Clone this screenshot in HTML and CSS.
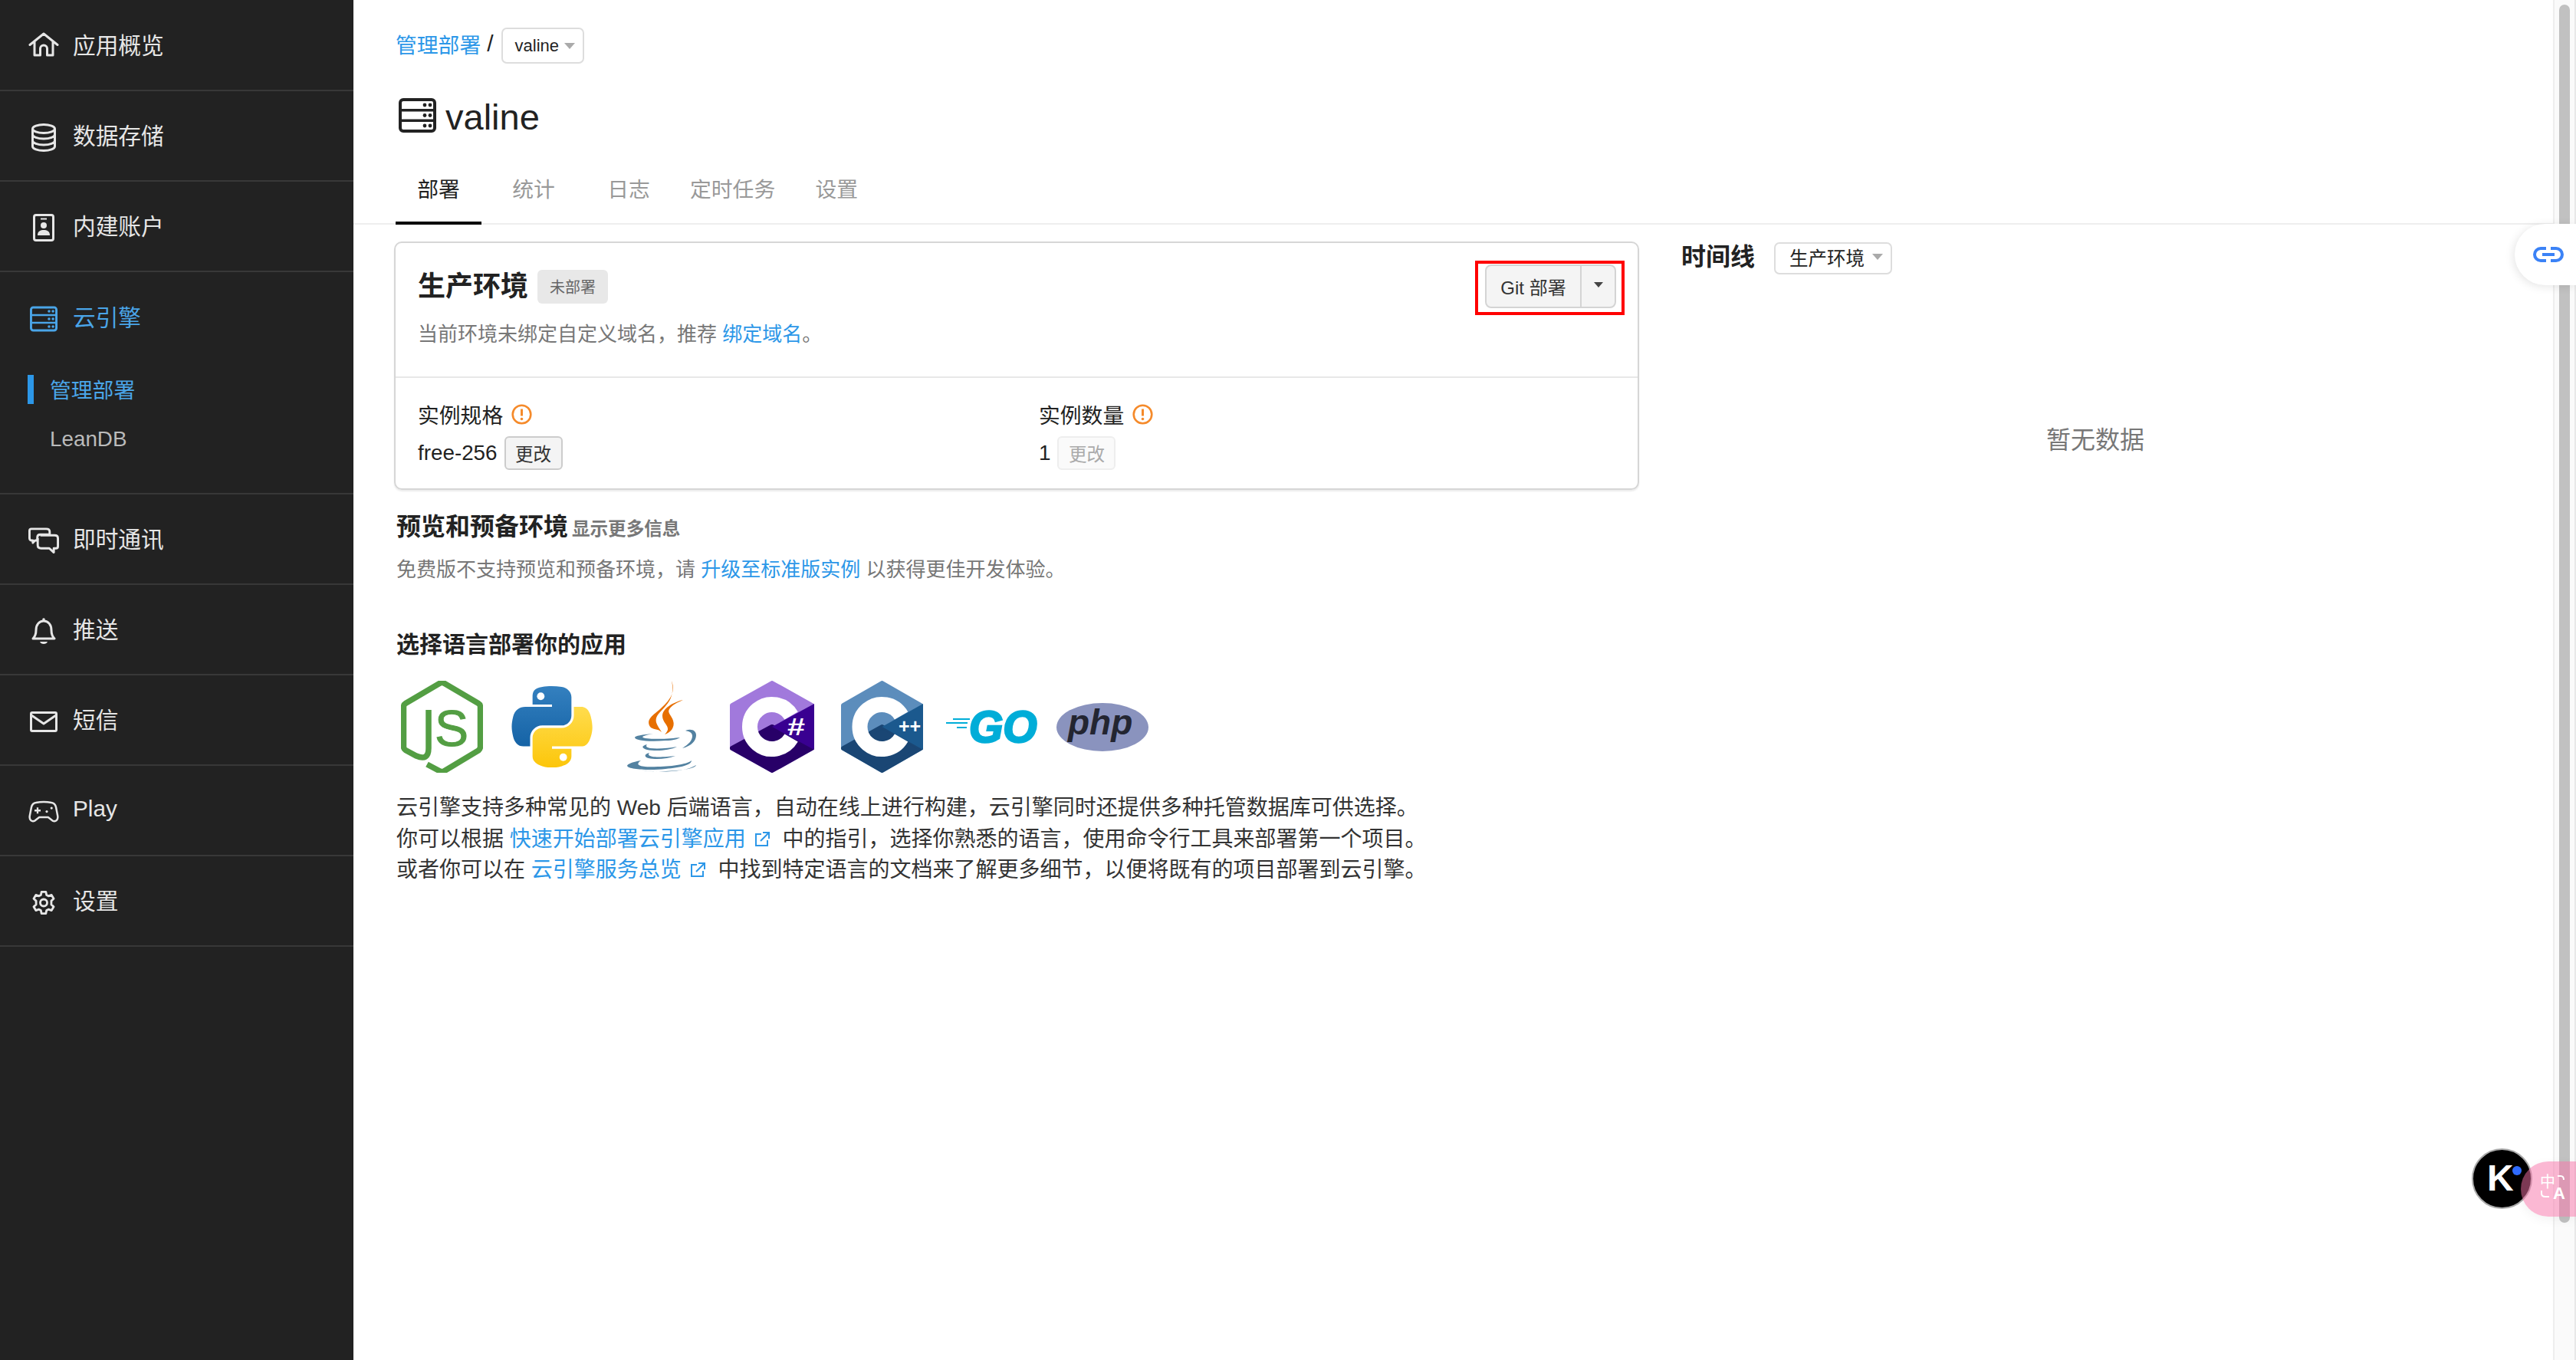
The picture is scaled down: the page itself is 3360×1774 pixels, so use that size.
FILE: index.html
```html
<!DOCTYPE html>
<html lang="zh-CN">

<head>
    <meta charset="UTF-8">
    <title>valine - 云引擎</title>
    <link rel="stylesheet" href="styles.css">
</head>

<body>
    <svg class="sprites" xmlns="http://www.w3.org/2000/svg">
        <symbol id="i-server" viewBox="0 0 49 45">
            <rect x="2" y="2" width="45" height="41" rx="4" fill="none" stroke="currentColor" stroke-width="4" />
            <path d="M2 15.7H47M2 29.3H47" stroke="currentColor" stroke-width="3.5" />
            <g fill="currentColor">
                <circle cx="34" cy="9" r="2.4" /><circle cx="41" cy="9" r="2.4" />
                <circle cx="34" cy="22.5" r="2.4" /><circle cx="41" cy="22.5" r="2.4" />
                <circle cx="34" cy="36" r="2.4" /><circle cx="41" cy="36" r="2.4" />
            </g>
        </symbol>
        <symbol id="i-info" viewBox="0 0 27 27">
            <circle cx="13.5" cy="13.5" r="11.8" fill="none" stroke="#f58a2a" stroke-width="2.6" />
            <path d="M13.5 6.5V15.5" stroke="#f58a2a" stroke-width="3" />
            <circle cx="13.5" cy="19.5" r="1.8" fill="#f58a2a" />
        </symbol>
        <symbol id="i-ext" viewBox="0 0 22 22">
            <path d="M10 4H3V19H18V12M12 2H20V10M20 2L9 13" fill="none" stroke="currentColor" stroke-width="2" />
        </symbol>
    </svg>

    <div class="app">
        <aside class="sidebar">
            <a class="nav-row">
                <span class="nav-icon nav-icon-home">
                    <svg width="40" height="32" viewBox="0 0 40 32" fill="none" stroke="currentColor" stroke-width="3" stroke-linejoin="round" stroke-linecap="round">
                        <path d="M2 16.5L20 2L38 16.5M8 12V30H15.5V21.5A4.5 4.5 0 0 1 24.5 21.5V30H32V12" />
                    </svg>
                </span>
                应用概览
            </a>
            <a class="nav-row">
                <span class="nav-icon">
                    <svg width="32" height="37" viewBox="0 0 32 37" fill="none" stroke="currentColor" stroke-width="3">
                        <ellipse cx="16" cy="7" rx="14.5" ry="5.5" />
                        <path d="M1.5 7V30C1.5 33 8 35.5 16 35.5S30.500 33 30.500 30V7M1.500 14.500C1.500 17.500 8 20 16 20S30.500 17.500 30.500 14.500M1.500 22.500C1.500 25.500 8 28 16 28S30.500 25.500 30.500 22.500" />
                    </svg>
                </span>
                数据存储
            </a>
            <a class="nav-row">
                <span class="nav-icon">
                    <svg width="28" height="36" viewBox="0 0 28 36" fill="none" stroke="currentColor" stroke-width="3">
                        <rect x="1.500" y="1.500" width="25" height="33" rx="2.500" />
                        <path d="M10 6.500H18" stroke-width="2" />
                        <circle cx="14" cy="15" r="4" fill="currentColor" stroke="none" />
                        <path d="M6 28C6 22.500 10 21 14 21S22 22.500 22 28Z" fill="currentColor" stroke="none" />
                    </svg>
                </span>
                内建账户
            </a>

            <div class="nav-group">
                <a class="nav-row nav-row-active">
                    <span class="nav-icon"><svg class="server-small"><use href="#i-server" /></svg></span>
                    云引擎
                </a>
                <a class="sub-row sub-row-active">管理部署</a>
                <a class="sub-row">LeanDB</a>
            </div>

            <a class="nav-row">
                <span class="nav-icon">
                    <svg width="41" height="35" viewBox="0 0 41 35" fill="none" stroke="currentColor" stroke-width="3" stroke-linejoin="round">
                        <path d="M4 1.500H24C27 1.500 28.500 3 28.500 5.500V9H16C13.500 9 12 10.500 12 13V17H9L6 20V17H4C2.500 17 1.500 15.500 1.500 14V4C1.500 2.500 2.500 1.500 4 1.500Z" />
                        <path d="M16 10H35C38 10 39.500 11.500 39.500 14V25C39.500 26.500 38.500 27.500 37 27.500H34V33L28 27.500H17C14 27.500 12.500 26 12.500 23.500V14" />
                    </svg>
                </span>
                即时通讯
            </a>
            <a class="nav-row">
                <span class="nav-icon">
                    <svg width="32" height="36" viewBox="0 0 32 36" fill="none" stroke="currentColor" stroke-width="3" stroke-linejoin="round">
                        <path d="M2 28C5 25 6 22 6 17C6 10 10 5 16 5S26 10 26 17C26 22 27 25 30 28Z" />
                        <circle cx="16" cy="3" r="1.800" fill="currentColor" stroke="none" />
                        <path d="M11 32H21C20 36 12 36 11 32Z" fill="currentColor" stroke="none" />
                    </svg>
                </span>
                推送
            </a>
            <a class="nav-row">
                <span class="nav-icon">
                    <svg width="36" height="27" viewBox="0 0 36 27" fill="none" stroke="currentColor" stroke-width="3" stroke-linejoin="round">
                        <rect x="1.500" y="1.500" width="33" height="24" rx="1.500" />
                        <path d="M2 5L18 16L34 5" />
                    </svg>
                </span>
                短信
            </a>
            <a class="nav-row">
                <span class="nav-icon">
                    <svg width="45" height="32" viewBox="0 0 45 32" fill="none" stroke="currentColor" stroke-width="2.800" stroke-linejoin="round">
                        <path d="M11 2.500C18 1.200 27 1.200 34 2.500C38 3 39.500 5 40.500 9L43 22C44 28 40 31 35.500 29L29 24H16L9.500 29C5 31 1 28 2 22L4.500 9C5.500 5 7 3 11 2.500Z" />
                        <path d="M9 14H18M13.500 9.500V18.500" stroke-width="2.600" />
                        <circle cx="27" cy="15.500" r="1.800" fill="currentColor" stroke="none" />
                        <circle cx="34" cy="10.500" r="1.800" fill="currentColor" stroke="none" />
                    </svg>
                </span>
                Play
            </a>
            <a class="nav-row">
                <span class="nav-icon">
                    <svg width="34" height="35" viewBox="0 0 24 24" fill="none" stroke="currentColor" stroke-width="2" stroke-linejoin="round">
                        <circle cx="12" cy="12" r="3.200" />
                        <path d="M10 2H14L14.600 4.900L16.400 5.900L19.200 4.900L21.200 8.300L19 10.300V13.700L21.200 15.700L19.200 19.100L16.400 18.100L14.600 19.100L14 22H10L9.400 19.100L7.600 18.100L4.800 19.100L2.800 15.700L5 13.700V10.300L2.800 8.300L4.800 4.900L7.600 5.900L9.400 4.900Z" />
                    </svg>
                </span>
                设置
            </a>
        </aside>

        <main class="main">
            <header class="page-head">
                <div class="crumbs">
                    <a class="link crumb-link">管理部署</a>
                    <span class="crumb-sep">/</span>
                    <span class="select select-crumb">valine<i class="caret"></i></span>
                </div>
                <h1 class="page-title"><svg class="server-big"><use href="#i-server" /></svg><span class="page-name">valine</span></h1>
            </header>

            <nav class="tabs">
                <a class="tab tab-active">部署</a>
                <a class="tab">统计</a>
                <a class="tab">日志</a>
                <a class="tab">定时任务</a>
                <a class="tab">设置</a>
            </nav>

            <div class="content">
                <section class="left-col">
                    <div class="card">
                        <div class="card-head">
                            <div class="card-top">
                                <div class="env-title">
                                    <h2>生产环境</h2>
                                    <span class="badge">未部署</span>
                                </div>
                                <div class="git-wrap">
                                    <button class="git-btn">
                                        <span class="git-main">Git 部署</span>
                                        <span class="git-more"><i class="caret caret-dark"></i></span>
                                    </button>
                                </div>
                            </div>
                            <p class="card-desc">当前环境未绑定自定义域名，推荐 <a class="link">绑定域名</a>。</p>
                        </div>
                        <div class="specs">
                            <div class="spec">
                                <div class="spec-name">实例规格 <svg class="info"><use href="#i-info" /></svg></div>
                                <div class="spec-value">free-256 <button class="btn-small">更改</button></div>
                            </div>
                            <div class="spec">
                                <div class="spec-name">实例数量 <svg class="info"><use href="#i-info" /></svg></div>
                                <div class="spec-value">1 <button class="btn-small btn-disabled">更改</button></div>
                            </div>
                        </div>
                    </div>

                    <h3 class="preview-title">预览和预备环境 <small>显示更多信息</small></h3>
                    <p class="preview-text">免费版不支持预览和预备环境，请 <a class="link">升级至标准版实例</a> 以获得更佳开发体验。</p>

                    <h3 class="lang-title">选择语言部署你的应用</h3>
                    <div class="logos">
                        <div class="logo">
                            <svg width="107" height="120" viewBox="0 0 107 120">
                                <path d="M34 109L51 118Q53.500 119 56 118L101 91Q103.500 89 103.500 86V34Q103.500 31 101 29.500L56 3Q53.500 2 51 3L6 29.500Q3.500 31 3.500 34V86Q3.500 89 6 90.500L20 98Q36 105 36 88V38" fill="none" stroke="#539e43" stroke-width="7.500" />
                                <text class="node-s" x="44" y="85">S</text>
                            </svg>
                        </div>
                        <div class="logo">
                            <svg width="106" height="106" viewBox="0 0 111 112">
                                <defs>
                                    <linearGradient id="py-blue" x1="0" y1="0" x2="0" y2="1">
                                        <stop offset="0" stop-color="#3480bf" /><stop offset="1" stop-color="#1563a6" />
                                    </linearGradient>
                                    <linearGradient id="py-yellow" x1="0" y1="0" x2="0" y2="1">
                                        <stop offset="0" stop-color="#ffdc4d" /><stop offset="1" stop-color="#fcc60a" />
                                    </linearGradient>
                                </defs>
                                <path fill="url(#py-blue)" d="M54.920 0C50.340 0 45.960 .410 42.110 1.090C30.760 3.090 28.700 7.290 28.700 15.030V25.250H55.500V28.660H18.640C10.850 28.660 4.030 33.340 1.900 42.250C-.560 52.460 -.670 58.830 1.900 69.480C3.800 77.420 8.350 83.070 16.140 83.070H25.360V70.830C25.360 61.980 33.020 54.180 42.110 54.180H68.880C76.330 54.180 82.280 48.040 82.280 40.560V15.030C82.280 7.770 76.150 2.310 68.880 1.090C64.280 .330 59.500 0 54.920 0Z" />
                                <circle cx="40" cy="14" r="5.200" fill="#fff" />
                                <path fill="url(#py-yellow)" d="M85.630 28.660V40.560C85.630 49.790 77.810 57.560 68.880 57.560H42.110C34.780 57.560 28.700 63.840 28.700 71.180V96.710C28.700 103.980 35.020 108.250 42.110 110.330C50.600 112.830 58.740 113.280 68.880 110.330C75.620 108.380 82.280 104.440 82.280 96.710V86.490H55.500V83.070H95.680C103.470 83.070 106.370 77.640 109.080 69.480C111.870 61.080 111.750 53 109.080 42.250C107.150 34.500 103.470 28.660 95.680 28.660Z" />
                                <circle cx="71" cy="98" r="5.200" fill="#fff" />
                            </svg>
                        </div>
                        <div class="logo">
                            <svg width="91" height="120" viewBox="0 0 91 120">
                                <g fill="#e76f00">
                                    <path d="M58 0C64 16 54 27 44 36C34 45 24 50 30 60C33 64 40 62 45 67C40 58 33 52 42 42C52 31 63 22 58 0Z" />
                                    <path d="M73 25C60 28 46 36 46 46C46 54 54 58 53 64C52 67 50 69 49 70C56 68 63 61 60 52C58 45 52 42 55 37C58 32 66 28 73 25Z" />
                                </g>
                                <g fill="#5382a1">
                                    <path d="M34 69C20 70 10 72 10 74C10 78 30 80 50 78C60 78 66 76 69 74C60 75 40 77 24 75C18 74 18 72 34 69Z" />
                                    <path d="M26 83C18 85 19 88 26 90C38 92 55 91 65 86C55 88 40 89 30 88C25 87 24 85 26 83Z" />
                                    <path d="M29 94C21 96 23 100 28 101C38 103 52 102 63 98C55 99 40 100 33 99C28 98 27 96 29 94Z" />
                                    <path d="M18 104C6 106 0 109 0 111C2 116 30 117 50 115C70 113 84 110 84 104C80 108 60 112 40 112C20 113 8 111 18 104Z" />
                                    <path d="M17 116C35 120 75 120 90 110C88 115 70 117 50 118C40 119 25 118 17 116Z" />
                                    <path d="M76 65C84 62 90 65 90 71C90 78 84 85 72 88C80 83 85 78 85 72C85 67 80 66 76 65Z" />
                                </g>
                            </svg>
                        </div>
                        <div class="logo">
                            <svg width="110" height="120" viewBox="0 0 110 120">
                                <path d="M55 3L107 32V88L55 117L3 88V32Z" fill="#a179dc" stroke="#a179dc" stroke-width="6" stroke-linejoin="round" />
                                <path d="M55 60L3 88L55 117L107 88Z" fill="#280068" stroke="#280068" stroke-width="6" stroke-linejoin="round" />
                                <path d="M55 60L110 30V90Z" fill="#390091" />
                                <path d="M80.100 45.500A29 29 0 1 0 80.100 74.500" fill="none" stroke="#fff" stroke-width="20" />
                                <text class="logo-mark" x="75" y="71" font-size="31" textLength="23" lengthAdjust="spacingAndGlyphs">#</text>
                            </svg>
                        </div>
                        <div class="logo">
                            <svg width="107" height="120" viewBox="0 0 107 120">
                                <path d="M53.500 3L104 32V88L53.500 117L3 88V32Z" fill="#5c8dbc" stroke="#5c8dbc" stroke-width="6" stroke-linejoin="round" />
                                <path d="M53.500 60L3 88L53.500 117L104 88Z" fill="#1a4674" stroke="#1a4674" stroke-width="6" stroke-linejoin="round" />
                                <path d="M53.500 60L107 30V90Z" fill="#1b598e" />
                                <path d="M78.600 45.500A29 29 0 1 0 78.600 74.500" fill="none" stroke="#fff" stroke-width="20" />
                                <text class="logo-mark" x="75" y="68" font-size="25">++</text>
                            </svg>
                        </div>
                        <div class="logo">
                            <svg width="120" height="70" viewBox="0 -12 120 70">
                                <path d="M9 13H31M0 18H28M14 24H27" stroke="#00add8" stroke-width="2" />
                                <text class="go-text" x="30" y="43">GO</text>
                            </svg>
                        </div>
                        <div class="logo">
                            <svg width="120" height="63" viewBox="0 0 120 63">
                                <ellipse cx="60" cy="31.500" rx="60" ry="31.500" fill="#8a93be" />
                                <text class="php-text" x="15" y="41">php</text>
                            </svg>
                        </div>
                    </div>

                    <p class="intro">
                        云引擎支持多种常见的 Web 后端语言，自动在线上进行构建，云引擎同时还提供多种托管数据库可供选择。<br>
                        你可以根据 <a class="link">快速开始部署云引擎应用<svg class="ext"><use href="#i-ext" /></svg></a> 中的指引，选择你熟悉的语言，使用命令行工具来部署第一个项目。<br>
                        或者你可以在 <a class="link">云引擎服务总览<svg class="ext"><use href="#i-ext" /></svg></a> 中找到特定语言的文档来了解更多细节，以便将既有的项目部署到云引擎。
                    </p>
                </section>

                <section class="right-col">
                    <div class="timeline-head">
                        <h3>时间线</h3>
                        <span class="select select-env">生产环境<i class="caret"></i></span>
                    </div>
                    <p class="empty">暂无数据</p>
                </section>
            </div>
        </main>

        <div class="scrollbar"><div class="thumb"></div></div>
    </div>

    <!-- browser extension widgets -->
    <div class="float-link">
        <svg width="40" height="20" viewBox="0 0 40 20" fill="none" stroke="#3b82f6" stroke-width="4">
            <path d="M17 2H10A8 8 0 0 0 10 18H17M23 2H30A8 8 0 0 1 30 18H23M12 10H28" />
        </svg>
    </div>
    <div class="float-kimi"><span class="kimi-k">K</span><i class="kimi-dot"></i></div>
    <div class="float-translate">
        <svg class="tr-arcs" width="72" height="72" viewBox="0 0 72 72" fill="none" stroke="#fff" stroke-width="2">
            <path d="M48 19H52Q56 19 56 24M27 38V42Q27 46 32 46H37" />
        </svg>
        <span class="tr-zh">中</span><span class="tr-a">A</span>
    </div>
</body>

</html>
```

FILE: styles.css
```css
* {
    box-sizing: border-box;
}

html,
body {
    margin: 0;
    height: 1774px;
    overflow: hidden;
}

body {
    font-family: "Liberation Sans", "Noto Sans CJK SC", sans-serif;
    font-size: 28px;
    color: #222;
    background: #fff;
}

.sprites {
    display: none;
}

.app {
    display: flex;
    height: 100%;
}

a {
    text-decoration: none;
}

h1,
h2,
h3,
p {
    margin: 0;
}

.link {
    color: #2c97e8;
}

/* sidebar */
.sidebar {
    width: 461px;
    flex: none;
    padding-top: 1px;
    background: #222;
    color: #e6e6e6;
}

.nav-row {
    display: flex;
    align-items: center;
    height: 118px;
    padding: 0 0 4px 37px;
    font-size: 29.700px;
    border-bottom: 2px solid #383838;
}

.nav-icon {
    display: flex;
    justify-content: center;
    align-items: center;
    width: 40px;
    margin-right: 18px;
    padding-top: 8px;
}

.nav-icon-home {
    padding-top: 1px;
}

.server-small {
    width: 36px;
    height: 34px;
}

.nav-group {
    height: 290px;
    border-bottom: 2px solid #383838;
}

.nav-group .nav-row {
    border-bottom: 0;
}

.nav-row-active {
    color: #4aa5e8;
}

.sub-row {
    display: block;
    position: relative;
    height: 63px;
    line-height: 42px;
    padding-left: 65px;
    font-size: 27.800px;
    color: #bbb;
}

.sub-row:nth-child(2) {
    margin-top: 16px;
}

.sub-row-active {
    color: #4aa5e8;
}

.sub-row-active::before {
    content: "";
    position: absolute;
    left: 36px;
    top: 0;
    width: 8px;
    height: 38px;
    background: #2c97e8;
}

/* main area */
.main {
    flex: 1;
    min-width: 0;
}

.page-head {
    padding: 36px 0 0 55px;
}

.crumbs {
    display: flex;
    align-items: center;
    height: 47px;
}

.crumb-link {
    margin-bottom: 5px;
    font-size: 27.800px;
}

.crumb-sep {
    margin: 0 10px 5px 8px;
    font-size: 30px;
}

.select {
    display: inline-flex;
    align-items: center;
    justify-content: space-between;
    border: 2px solid #ddd;
    border-radius: 7px;
    background: #fff;
}

.select-crumb {
    width: 108px;
    height: 47px;
    padding: 0 10px 0 16px;
    font-size: 22px;
}

.caret {
    display: inline-block;
    width: 0;
    height: 0;
    border-style: solid;
    border-width: 8px 7.500px 0;
    border-color: #aaa transparent transparent;
}

.caret-dark {
    border-width: 7px 6.500px 0;
    border-top-color: #444;
}

.page-title {
    display: flex;
    align-items: center;
    height: 45px;
    margin: 45px 0 0 4px;
    font-size: 47px;
    font-weight: 400;
}

.page-name {
    margin-top: 4px;
}

.server-big {
    width: 49px;
    height: 45px;
    margin-right: 12px;
}

.tabs {
    display: flex;
    gap: 12px;
    height: 92px;
    margin-top: 28px;
    padding-left: 55px;
    border-bottom: 2px solid #eee;
}

.tab {
    display: flex;
    justify-content: center;
    align-items: center;
    height: 92px;
    min-width: 112px;
    padding: 0 12px;
    font-size: 27.800px;
    color: #999;
    border-bottom: 4px solid transparent;
}

.tab-active {
    color: #222;
    border-bottom-color: #000;
}

.content {
    display: flex;
    padding: 22px 57px 0 53px;
}

.left-col {
    width: 1624px;
    flex: none;
}

/* production card */
.card {
    height: 324px;
    border: 2px solid #d6d6d6;
    border-radius: 10px;
    box-shadow: 0 2px 2px rgba(0, 0, 0, 0.08);
}

.card-head {
    height: 176px;
    padding: 28px 28px 0 29px;
    border-bottom: 2px solid #e8e8e8;
}

.card-top {
    display: flex;
    justify-content: space-between;
    align-items: center;
    height: 57px;
}

.env-title {
    display: flex;
    align-items: center;
}

.env-title h2 {
    margin-bottom: 8px;
    font-size: 36px;
    font-weight: 600;
}

.badge {
    display: flex;
    align-items: center;
    height: 44px;
    margin-left: 12px;
    padding: 0 16px;
    font-size: 20px;
    color: #666;
    background: #e8e8e8;
    border-radius: 6px;
}

.git-wrap {
    position: relative;
}

/* red annotation box of the screenshot */
.git-wrap::after {
    content: "";
    position: absolute;
    inset: -5px -11px -9px -13px;
    border: 4px solid #f00;
}

.git-btn {
    display: flex;
    width: 171px;
    height: 57px;
    padding: 0;
    font: inherit;
    font-size: 24px;
    color: #333;
    background: #f4f4f4;
    border: 2px solid #d4d4d4;
    border-radius: 8px;
}

.git-main {
    display: flex;
    align-items: center;
    justify-content: center;
    width: 124px;
    height: 100%;
    border-right: 2px solid #d4d4d4;
}

.git-more {
    flex: 1;
    display: flex;
    justify-content: center;
    padding-top: 21px;
}

.card-desc {
    margin-top: 14px;
    line-height: 40px;
    font-size: 26px;
    color: #777;
}

.specs {
    display: grid;
    grid-template-columns: 810px 1fr;
    padding: 29px 0 0 29px;
}

.spec-name {
    display: flex;
    align-items: center;
    gap: 11px;
    height: 40px;
    padding-bottom: 4px;
    font-size: 27.800px;
}

.info {
    width: 27px;
    height: 27px;
}

.spec-value {
    display: flex;
    align-items: center;
    gap: 9px;
    margin-top: 7px;
    font-size: 27.800px;
}

.btn-small {
    width: 76px;
    height: 44px;
    padding: 0;
    font: inherit;
    font-size: 23.600px;
    color: #333;
    background: #f4f4f4;
    border: 2px solid #ccc;
    border-radius: 6px;
}

.btn-disabled {
    color: #aaa;
    background: #fafafa;
    border-color: #eee;
}

/* sections below the card */
.preview-title {
    margin: 28px 0 0 3px;
    line-height: 40px;
    font-size: 32px;
    font-weight: 600;
}

.preview-title small {
    margin-left: -4px;
    font-size: 23.600px;
    color: #777;
}

.preview-text {
    margin: 13px 0 0 3px;
    line-height: 40px;
    font-size: 26px;
    color: #777;
}

.lang-title {
    margin: 58px 0 0 3px;
    line-height: 40px;
    font-size: 30px;
    font-weight: 600;
}

.logos {
    display: flex;
    gap: 19.700px;
    margin-top: 27px;
}

.logo {
    display: flex;
    justify-content: center;
    align-items: center;
    width: 124px;
    height: 120px;
    flex: none;
}

.node-s {
    font-size: 66px;
    fill: #539e43;
    stroke: #539e43;
    stroke-width: 1;
}

.logo-mark {
    font-weight: 700;
    fill: #fff;
}

.go-text {
    font-size: 57px;
    font-weight: 700;
    font-style: italic;
    fill: #00add8;
    stroke: #00add8;
    stroke-width: 2.500;
}

.php-text {
    font-size: 46px;
    font-weight: 700;
    font-style: italic;
    fill: #232531;
}

.intro {
    margin: 26px 0 0 3px;
    line-height: 40.500px;
    color: #333;
    white-space: nowrap;
}

.ext {
    width: 22px;
    height: 22px;
    margin: 0 8px 0 10px;
    vertical-align: -2px;
}

/* timeline */
.right-col {
    flex: 1;
    margin-left: 55px;
    padding-top: 1px;
}

.timeline-head {
    display: flex;
    align-items: center;
    height: 42px;
}

.timeline-head h3 {
    margin-bottom: 10px;
    font-size: 32px;
    font-weight: 600;
}

.select-env {
    width: 154px;
    height: 42px;
    margin-left: 25px;
    padding: 0 10px 4px 18px;
    font-size: 24.500px;
}

.empty {
    margin-top: 196px;
    line-height: 40px;
    font-size: 32px;
    color: #777;
    text-align: center;
}

/* scrollbar */
.scrollbar {
    width: 30px;
    flex: none;
    background: #fafafa;
    border-left: 2px solid #eee;
    border-right: 2px solid #e8e8e8;
}

.thumb {
    width: 14px;
    height: 1589px;
    margin: 6px 0 0 6px;
    background: #c1c1c1;
    border-radius: 7px;
}

/* floating widgets on top of the page */
.float-link {
    position: absolute;
    right: 0;
    top: 292px;
    display: flex;
    align-items: center;
    width: 80px;
    height: 80px;
    padding-left: 24px;
    background: #fff;
    border-radius: 40px 0 0 40px;
    box-shadow: -2px 2px 12px rgba(0, 0, 0, 0.1);
}

.float-kimi {
    position: absolute;
    left: 3224px;
    top: 1498px;
    width: 79px;
    height: 79px;
    background: #000;
    border: 2px solid #aaa;
    border-radius: 50%;
}

.kimi-k {
    position: absolute;
    left: 18px;
    top: 9px;
    font-size: 48px;
    line-height: 56px;
    font-weight: 700;
    color: #fff;
}

.kimi-dot {
    position: absolute;
    left: 51px;
    top: 21px;
    width: 12px;
    height: 12px;
    background: #2f6bff;
    border-radius: 50%;
}

.float-translate {
    position: absolute;
    right: 0;
    top: 1515px;
    width: 72px;
    height: 72px;
    background: rgba(247, 113, 167, 0.5);
    border-radius: 36px 0 0 36px;
    box-shadow: 0 4px 14px rgba(0, 0, 0, 0.05);
}

.tr-arcs {
    position: absolute;
    left: 0;
    top: 0;
}

.tr-zh {
    position: absolute;
    left: 25px;
    top: 15px;
    font-size: 20px;
    line-height: 24px;
    color: #fff;
}

.tr-a {
    position: absolute;
    left: 42px;
    top: 30px;
    font-size: 22px;
    line-height: 24px;
    font-weight: 700;
    color: #fff;
}
```
